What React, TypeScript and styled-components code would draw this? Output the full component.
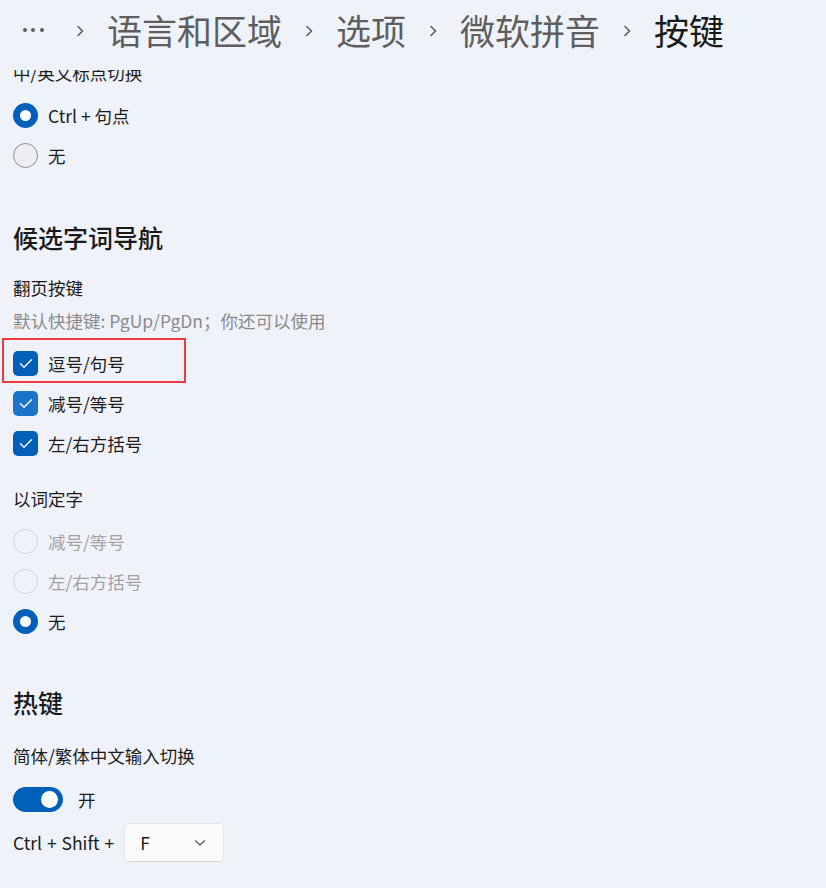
import React from "react";
import styled, { createGlobalStyle } from "styled-components";

const Global = createGlobalStyle`
  html, body { margin: 0; padding: 0; background: #eff3f9; }
  body {
    font-family: "Noto Sans CJK SC", "Noto Sans", sans-serif;
    color: #1b1b1b;
    -webkit-font-smoothing: antialiased;
  }
`;

const Page = styled.div`
  width: 826px;
  height: 888px;
  overflow: hidden;
  background: #eff3f9;
  display: flex;
  flex-direction: column;
`;

const Header = styled.header`
  height: 70px;
  box-sizing: border-box;
  padding: 0 0 10px 13px;
  display: flex;
  align-items: center;
  flex-shrink: 0;
`;

const More = styled.span`
  width: 40px;
  display: flex;
  justify-content: center;
  gap: 4.5px;
`;

const Dot = styled.span`
  width: 4px;
  height: 4px;
  border-radius: 50%;
  background: #5c5c5c;
`;

const Crumb = styled.span<{ $current?: boolean }>`
  font-size: 35px;
  line-height: 48px;
  color: ${(p) => (p.$current ? "#1a1a1a" : "#5e5e5e")};
  white-space: nowrap;
`;

const Sep = styled.span`
  width: 54px;
  display: flex;
  justify-content: center;
  align-items: center;
  padding-top: 2px;
`;

const Content = styled.main`
  padding: 0 13px;
  display: flex;
  flex-direction: column;
`;

const ClippedLabel = styled.div`
  height: 15px;
  overflow: hidden;
  display: flex;
  align-items: flex-end;
  font-size: 17.5px;
  & > span {
    display: block;
    line-height: 24px;
    height: 24px;
    flex-shrink: 0;
  }
`;

const Label = styled.div<{ $mt: number }>`
  margin-top: ${(p) => p.$mt}px;
  font-size: 17.5px;
  line-height: 24px;
  color: #1b1b1b;
`;

const Description = styled.div`
  margin-top: 9px;
  font-size: 17.5px;
  line-height: 24px;
  color: #8b8b8b;
`;

const SectionTitle = styled.h2<{ $mt: number }>`
  margin: ${(p) => p.$mt}px 0 0;
  font-size: 25px;
  line-height: 36px;
  font-weight: 500;
  color: #1a1a1a;
`;

const Group = styled.div`
  margin-top: 10px;
  display: flex;
  flex-direction: column;
`;

const OptionRow = styled.div<{ $disabled?: boolean }>`
  position: relative;
  height: 40px;
  display: flex;
  align-items: center;
  gap: 10px;
  font-size: 17.5px;
  color: ${(p) => (p.$disabled ? "#a3a3a3" : "#1b1b1b")};
`;

const RadioCircle = styled.span<{ $checked?: boolean; $disabled?: boolean }>`
  width: 25px;
  height: 25px;
  box-sizing: border-box;
  border-radius: 50%;
  flex-shrink: 0;
  ${(p) =>
    p.$checked
      ? `background: #ffffff; border: 7px solid #005fb8;`
      : p.$disabled
      ? `background: transparent; border: 1.5px solid #cfd1d4;`
      : `background: #eceef2; border: 1.5px solid #8c8c8c;`}
`;

const CheckBox = styled.span<{ $light?: boolean }>`
  width: 25px;
  height: 25px;
  border-radius: 5px;
  background: ${(p) => (p.$light ? "#1a74c8" : "#005fb8")};
  display: flex;
  align-items: center;
  justify-content: center;
  flex-shrink: 0;
`;

const Highlight = styled.span`
  position: absolute;
  left: -11px;
  top: -5px;
  width: 184px;
  height: 45px;
  box-sizing: border-box;
  border: 2px solid #ec3a3f;
  pointer-events: none;
`;

const ToggleRow = styled.div`
  margin-top: 11px;
  height: 40px;
  display: flex;
  align-items: center;
  gap: 15px;
  font-size: 17.5px;
`;

const Toggle = styled.span`
  width: 50px;
  height: 25px;
  border-radius: 13px;
  background: #005fb8;
  display: flex;
  align-items: center;
  justify-content: flex-end;
  padding-right: 5px;
  box-sizing: border-box;
`;

const Knob = styled.span`
  width: 17px;
  height: 17px;
  border-radius: 50%;
  background: #ffffff;
`;

const HotkeyRow = styled.div`
  margin-top: 4px;
  display: flex;
  align-items: center;
  gap: 10px;
  font-size: 17.5px;
  word-spacing: 1px;
`;

const Select = styled.div`
  width: 100px;
  height: 39px;
  box-sizing: border-box;
  background: #fbfbfc;
  border: 1px solid #e3e5e8;
  border-bottom-color: #d2d4d7;
  border-radius: 5px;
  display: flex;
  align-items: center;
  justify-content: space-between;
  padding: 0 17px 0 15px;
  font-size: 17.5px;
  color: #1b1b1b;
`;

const Chevron = () => (
  <svg width="10" height="14" viewBox="0 0 10 14">
    <path d="M3 2.5 L7.5 7 L3 11.5" fill="none" stroke="#5e5e5e" strokeWidth="1.6" strokeLinecap="round" strokeLinejoin="round" />
  </svg>
);

const Check = () => (
  <svg width="14" height="11" viewBox="0 0 14 11">
    <path d="M1.5 5.8 L5 9.2 L12.5 1.8" fill="none" stroke="#ffffff" strokeWidth="1.4" strokeLinecap="round" strokeLinejoin="round" />
  </svg>
);

const Down = () => (
  <svg width="12" height="8" viewBox="0 0 12 8">
    <path d="M1.5 1.8 L6 6 L10.5 1.8" fill="none" stroke="#606060" strokeWidth="1.3" strokeLinecap="round" strokeLinejoin="round" />
  </svg>
);

const Radio = ({ checked, disabled, label }: { checked?: boolean; disabled?: boolean; label: string }) => (
  <OptionRow $disabled={disabled}>
    <RadioCircle $checked={checked} $disabled={disabled} />
    <span>{label}</span>
  </OptionRow>
);

const CheckItem = ({ label, light, highlight }: { label: string; light?: boolean; highlight?: boolean }) => (
  <OptionRow>
    <CheckBox $light={light}>
      <Check />
    </CheckBox>
    <span>{label}</span>
    {highlight && <Highlight />}
  </OptionRow>
);

export default function App() {
  return (
    <>
      <Global />
      <Page>
        <Header>
          <More>
            <Dot />
            <Dot />
            <Dot />
          </More>
          <Sep>
            <Chevron />
          </Sep>
          <Crumb>语言和区域</Crumb>
          <Sep>
            <Chevron />
          </Sep>
          <Crumb>选项</Crumb>
          <Sep>
            <Chevron />
          </Sep>
          <Crumb>微软拼音</Crumb>
          <Sep>
            <Chevron />
          </Sep>
          <Crumb $current>按键</Crumb>
        </Header>
        <Content>
          <ClippedLabel>
            <span>中/英文标点切换</span>
          </ClippedLabel>
          <Group>
            <Radio checked label="Ctrl + 句点" />
            <Radio label="无" />
          </Group>

          <SectionTitle $mt={44}>候选字词导航</SectionTitle>
          <Label $mt={21}>翻页按键</Label>
          <Description>默认快捷键: PgUp/PgDn；你还可以使用</Description>
          <Group>
            <CheckItem label="逗号/句号" highlight />
            <CheckItem label="减号/等号" light />
            <CheckItem label="左/右方括号" />
          </Group>

          <Label $mt={24}>以词定字</Label>
          <Group>
            <Radio disabled label="减号/等号" />
            <Radio disabled label="左/右方括号" />
            <Radio checked label="无" />
          </Group>

          <SectionTitle $mt={43}>热键</SectionTitle>
          <Label $mt={24}>简体/繁体中文输入切换</Label>
          <ToggleRow>
            <Toggle>
              <Knob />
            </Toggle>
            <span>开</span>
          </ToggleRow>
          <HotkeyRow>
            <span>Ctrl + Shift +</span>
            <Select>
              <span>F</span>
              <Down />
            </Select>
          </HotkeyRow>
        </Content>
      </Page>
    </>
  );
}
